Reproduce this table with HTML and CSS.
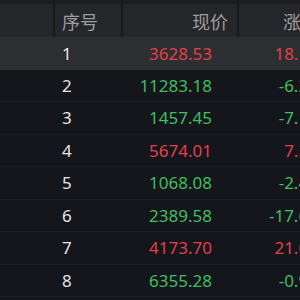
FILE: index.html
```
<!DOCTYPE html>
<html>
<head>
<meta charset="utf-8">
<link rel="stylesheet" href="styles.css">
</head>
<body>
<div class="topbar"></div>
<div class="grid">
  <div class="row head">
    <div class="c c1"></div>
    <div class="c c2">序号</div>
    <div class="c c3">现价</div>
    <div class="c c4">涨跌幅</div>
  </div>
  <div class="row sel">
    <div class="c c1"></div><div class="c c2 idx">1</div><div class="c c3 up">3628.53</div><div class="c c4 up">18.53%</div>
  </div>
  <div class="row">
    <div class="c c1"></div><div class="c c2 idx">2</div><div class="c c3 dn">11283.18</div><div class="c c4 dn">-6.27%</div>
  </div>
  <div class="row">
    <div class="c c1"></div><div class="c c2 idx">3</div><div class="c c3 dn">1457.45</div><div class="c c4 dn">-7.14%</div>
  </div>
  <div class="row">
    <div class="c c1"></div><div class="c c2 idx">4</div><div class="c c3 up">5674.01</div><div class="c c4 up">7.36%</div>
  </div>
  <div class="row">
    <div class="c c1"></div><div class="c c2 idx">5</div><div class="c c3 dn">1068.08</div><div class="c c4 dn">-2.48%</div>
  </div>
  <div class="row">
    <div class="c c1"></div><div class="c c2 idx">6</div><div class="c c3 dn">2389.58</div><div class="c c4 dn">-17.62%</div>
  </div>
  <div class="row">
    <div class="c c1"></div><div class="c c2 idx">7</div><div class="c c3 up">4173.70</div><div class="c c4 up">21.05%</div>
  </div>
  <div class="row">
    <div class="c c1"></div><div class="c c2 idx">8</div><div class="c c3 dn">6355.28</div><div class="c c4 dn">-0.91%</div>
  </div>
</div>
</body>
</html>
```
FILE: styles.css
```
html, body {
  margin: 0;
  padding: 0;
  width: 300px;
  height: 300px;
  overflow: hidden;
  background: #14161b;
  font-family: "Noto Sans", "Noto Sans CJK SC", sans-serif;
}
.topbar {
  height: 4px;
  background: #1b1c20;
}
.grid {
  width: 340px;
}
.row {
  display: grid;
  grid-template-columns: 55px 68px 116px 101px;
  height: 32.5px;
  border-bottom: 1px solid #1c1e23;
  box-sizing: border-box;
}
.row.head {
  height: 33px;
  background: #25262a;
  border-bottom: none;
}
.row.sel {
  background: #2d2e32;
  border-bottom: none;
}
.c {
  display: flex;
  align-items: center;
  font-size: 17px;
  white-space: nowrap;
}
.head .c {
  font-family: "Noto Sans CJK SC", sans-serif;
  font-size: 18px;
  color: #9d9d9f;
  border-right: 2px solid #18191c;
}
.head .c4 { border-right: none; }
.c2 { padding-left: 7px; }
.c3 { justify-content: flex-end; padding-right: 27px; }
.head .c3 { padding-right: 9px; }
.c4 { justify-content: flex-end; padding-right: 8px; }
.head .c4 { justify-content: flex-start; padding-left: 44px; padding-right: 0; }
.idx { color: #e6e6e6; }
.up { color: #e3404c; }
.dn { color: #3fbf60; }
```
